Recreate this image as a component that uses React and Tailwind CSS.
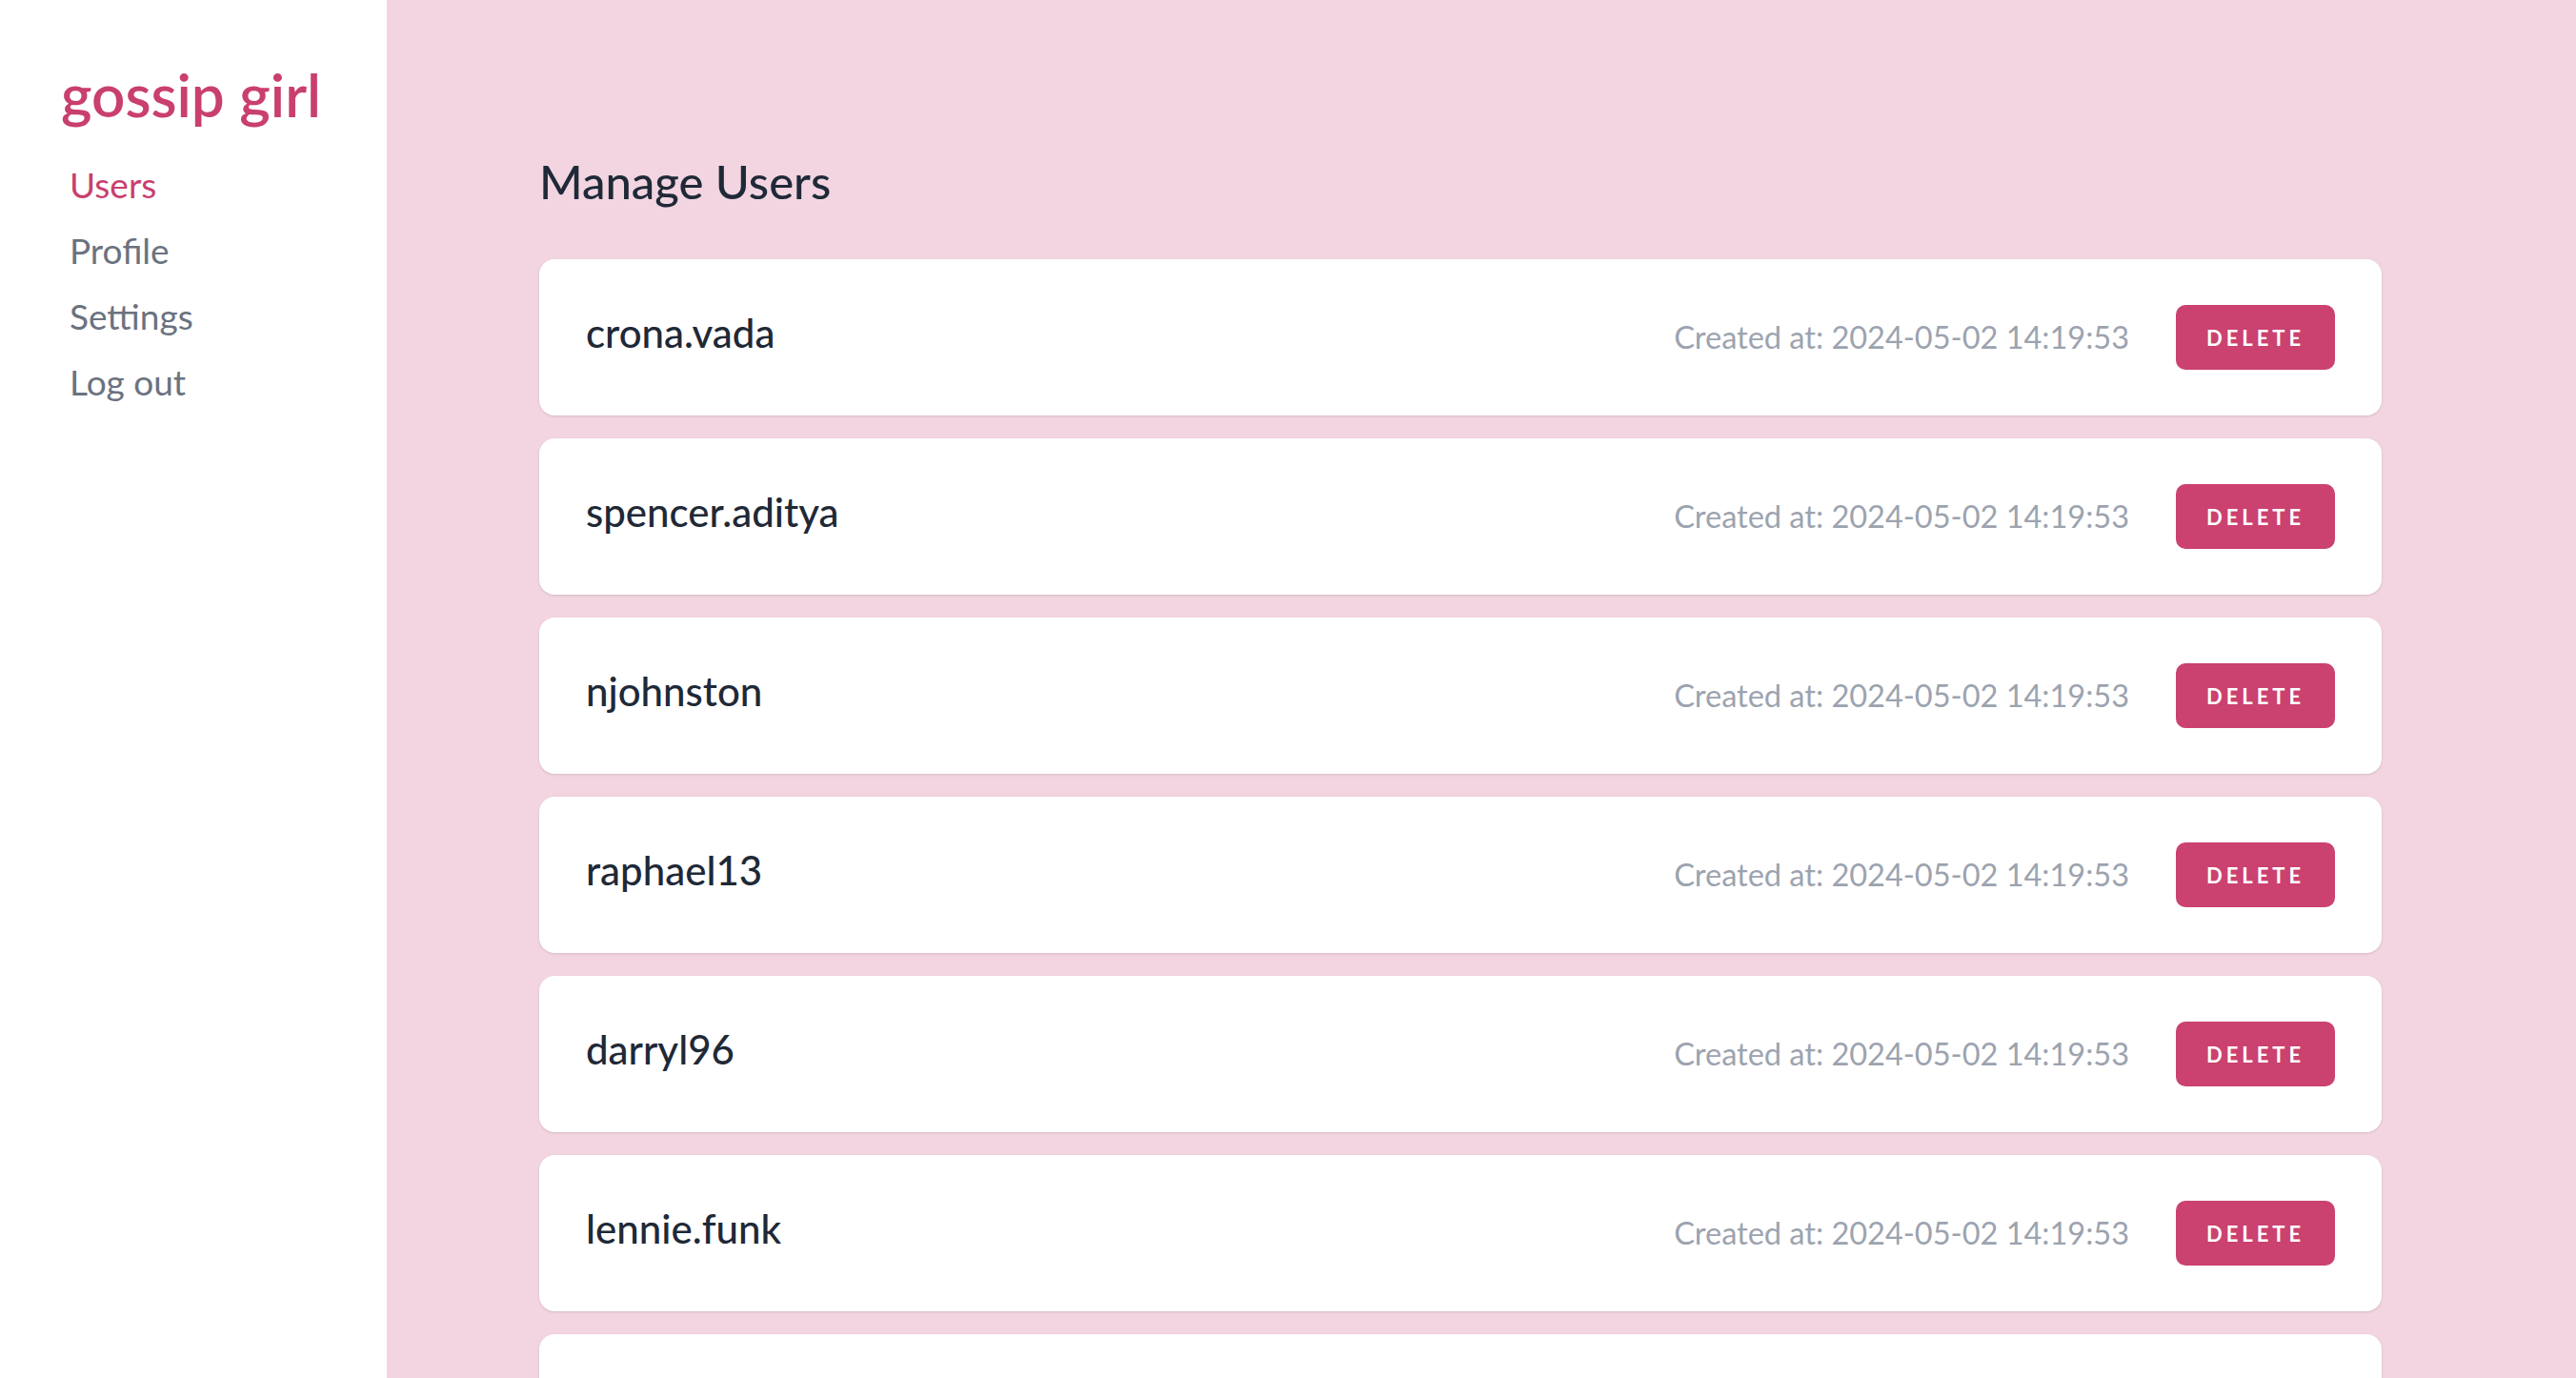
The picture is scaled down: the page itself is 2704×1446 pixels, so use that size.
import React from "react";

const users = [
  "crona.vada",
  "spencer.aditya",
  "njohnston",
  "raphael13",
  "darryl96",
  "lennie.funk",
  "hgreenholt",
];

export default function App() {
  return (
    <div
      className="flex h-screen w-full overflow-hidden bg-[#f2d5e0]"
      style={{ fontFamily: "Lato, 'Noto Sans', sans-serif" }}
    >
      <aside className="w-[406px] shrink-0 bg-white h-full">
        <div className="pl-[64px] pt-[64px] text-[62px] leading-[70px] font-semibold text-[#c93f6e]">
          gossip girl
        </div>
        <nav className="mt-[25px] flex flex-col pl-[73px] text-[37px] leading-[69px]">
          <a className="text-[#c93f6e]">Users</a>
          <a className="text-[#6b7280]">Profile</a>
          <a className="text-[#6b7280]">Settings</a>
          <a className="text-[#6b7280]">Log out</a>
        </nav>
      </aside>
      <main className="flex-1 pl-[160px] pt-[160px]">
        <div className="w-[1934px]">
          <h1 className="text-[49px] leading-[60px] font-medium text-[#1f2937]">
            Manage Users
          </h1>
          <div className="mt-[52px] flex flex-col gap-[24px]">
            {users.map((u) => (
              <div
                key={u}
                className="h-[164px] shrink-0 rounded-[16px] bg-white shadow-sm flex items-center px-[49px]"
              >
                <div className="flex-1 text-[42px] font-medium text-[#1f2937] -mt-[10px]">
                  {u}
                </div>
                <div className="text-[32.5px] text-[#9ca3af]">
                  Created at: 2024-05-02 14:19:53
                </div>
                <button className="ml-[49px] w-[167px] h-[68px] rounded-[10px] bg-[#cb4170] text-white text-[22px] font-bold tracking-[0.18em] flex items-center justify-center">
                  DELETE
                </button>
              </div>
            ))}
          </div>
        </div>
      </main>
    </div>
  );
}
